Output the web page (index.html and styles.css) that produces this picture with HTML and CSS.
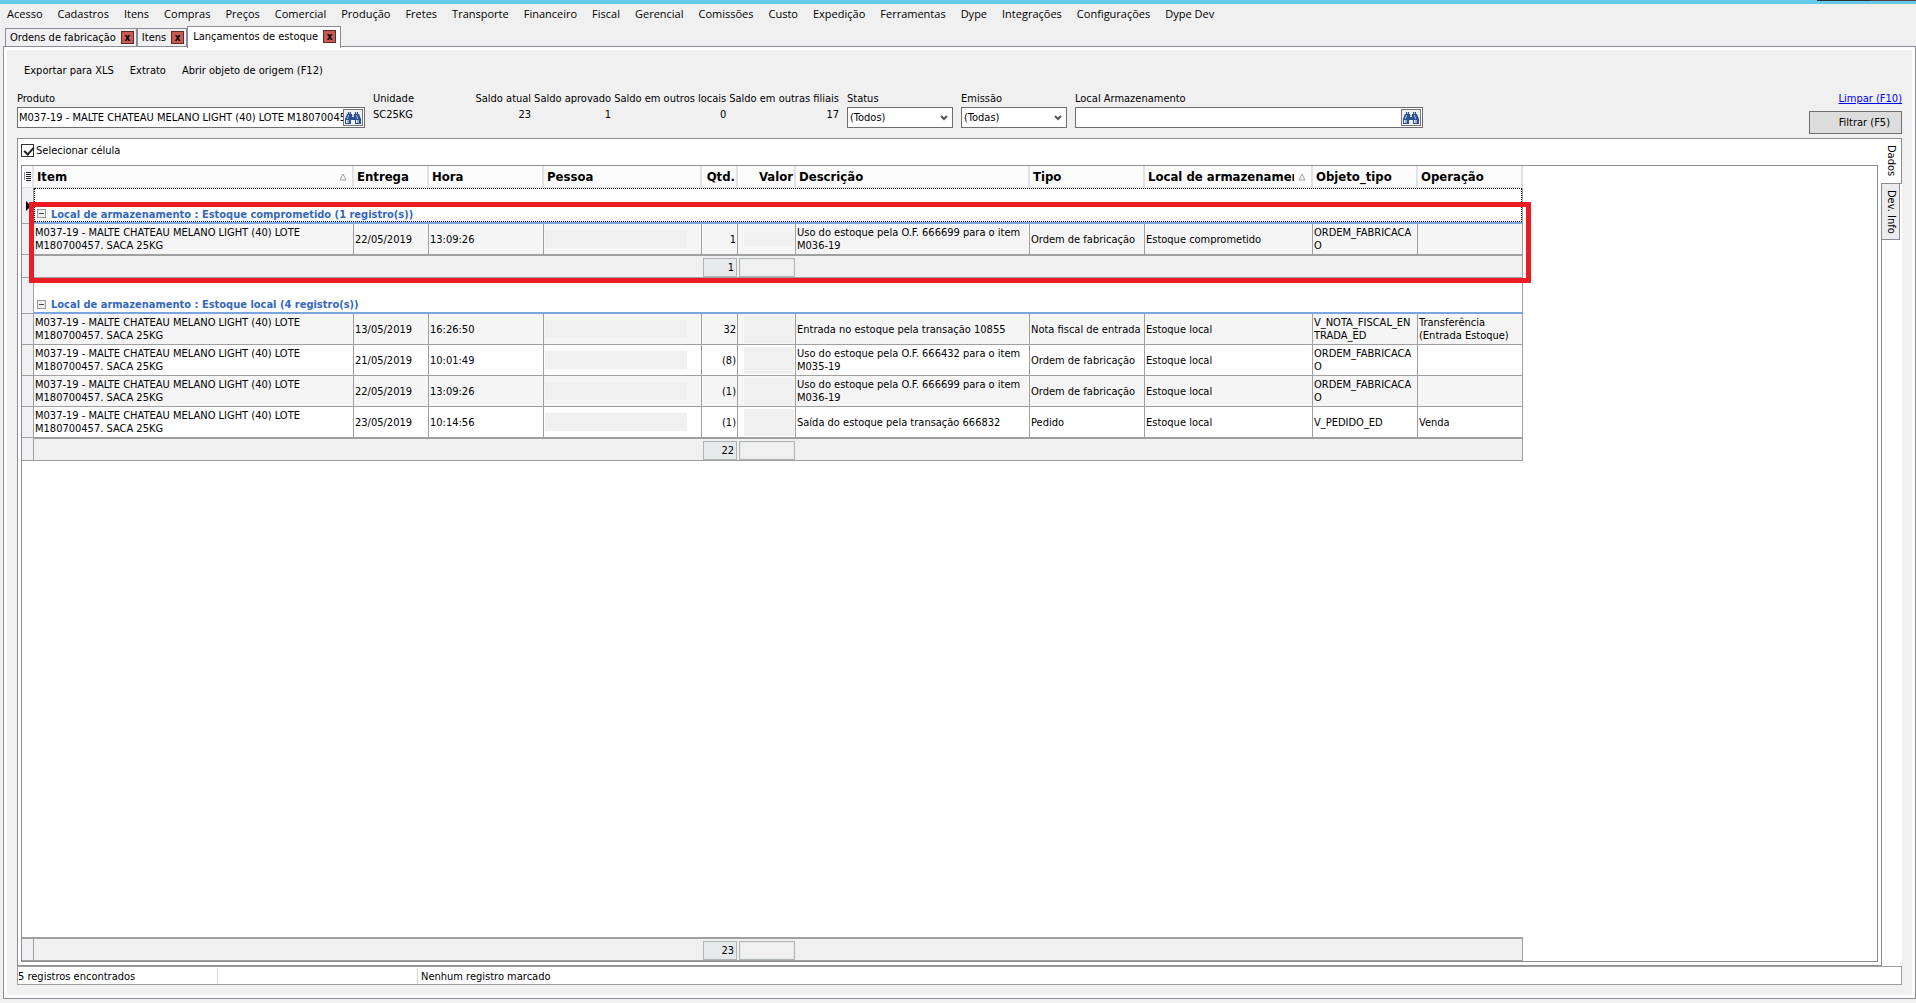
FILE: index.html
```html
<!DOCTYPE html>
<html lang="pt-BR">
<head>
    <meta charset="UTF-8">
    <meta name="viewport" content="width=device-width, initial-scale=1.0">
    <title>Lançamentos de estoque</title>
    <link rel="stylesheet" href="styles.css">
</head>
<body>

<svg class="symbols" width="0" height="0" aria-hidden="true">
    <symbol id="binoculars" viewBox="0 0 16 14">
        <path d="M3 1h3v2h1v3h2V3h1V1h3v2h1l2 5v5h-6V9H6v4H0V8l2-5h1z" fill="#2d4f8f"/>
        <path d="M4 1h1v2H4zM11 1h1v2h-1zM3 4h1l-1 4H2zM11 4h1l1 4h-1z" fill="#a9c3ea"/>
        <path d="M1 9h3v3H1zM11 9h3v3h-3z" fill="#8fb0e2"/>
        <path d="M1 9h1v3H1zM11 9h1v3h-1z" fill="#f2f7ff"/>
        <path d="M7 4h2v1H7z" fill="#8fb0e2"/>
    </symbol>
    <symbol id="chevron" viewBox="0 0 8 6">
        <path d="M1 1l3 3 3-3" fill="none" stroke="#555" stroke-width="2"/>
    </symbol>
    <symbol id="sort" viewBox="0 0 8 8">
        <path d="M4 1L7 7H1z" fill="none" stroke="#a0a0a0"/>
    </symbol>
</svg>

<div class="titlebar"><span class="caption-dark"></span><span class="caption-close"></span></div>

<nav class="menu">
    <a href="#">Acesso</a>
    <a href="#">Cadastros</a>
    <a href="#">Itens</a>
    <a href="#">Compras</a>
    <a href="#">Preços</a>
    <a href="#">Comercial</a>
    <a href="#">Produção</a>
    <a href="#">Fretes</a>
    <a href="#">Transporte</a>
    <a href="#">Financeiro</a>
    <a href="#">Fiscal</a>
    <a href="#">Gerencial</a>
    <a href="#">Comissões</a>
    <a href="#">Custo</a>
    <a href="#">Expedição</a>
    <a href="#">Ferramentas</a>
    <a href="#">Dype</a>
    <a href="#">Integrações</a>
    <a href="#">Configurações</a>
    <a href="#">Dype Dev</a>
</nav>

<div class="tabs">
    <div class="tab"><button class="tab-name">Ordens de fabricação</button><button class="tab-close">x</button></div>
    <div class="tab"><button class="tab-name">Itens</button><button class="tab-close">x</button></div>
    <div class="tab active"><button class="tab-name">Lançamentos de estoque</button><button class="tab-close">x</button></div>
</div>

<main class="page">
    <div class="toolbar">
        <button>Exportar para XLS</button>
        <button>Extrato</button>
        <button>Abrir objeto de origem (F12)</button>
    </div>

    <form class="filters">
        <div class="field lookup">
            <label for="produto">Produto</label>
            <div class="box">
                <input type="text" id="produto" value="M037-19 - MALTE CHATEAU MELANO LIGHT (40) LOTE M180700457. SACA 25KG">
                <button type="button" aria-label="Buscar produto"><svg><use href="#binoculars"/></svg></button>
            </div>
        </div>
        <dl class="balances">
            <div class="unit"><dt>Unidade</dt><dd>SC25KG</dd></div>
            <div><dt>Saldo atual</dt><dd>23</dd></div>
            <div><dt>Saldo aprovado</dt><dd>1</dd></div>
            <div><dt>Saldo em outros locais</dt><dd>0</dd></div>
            <div><dt>Saldo em outras filiais</dt><dd>17</dd></div>
        </dl>
        <div class="field choice">
            <label for="status">Status</label>
            <div class="box">
                <select id="status"><option>(Todos)</option></select>
                <svg class="arrow"><use href="#chevron"/></svg>
            </div>
        </div>
        <div class="field choice">
            <label for="emissao">Emissão</label>
            <div class="box">
                <select id="emissao"><option>(Todas)</option></select>
                <svg class="arrow"><use href="#chevron"/></svg>
            </div>
        </div>
        <div class="field lookup">
            <label for="local">Local Armazenamento</label>
            <div class="box">
                <input type="text" id="local">
                <button type="button" aria-label="Buscar local"><svg><use href="#binoculars"/></svg></button>
            </div>
        </div>
        <div class="actions">
            <a href="#">Limpar (F10)</a>
            <button type="button">Filtrar (F5)</button>
        </div>
    </form>

    <div class="views">
        <section class="panel">
            <label class="cell-select"><input type="checkbox" checked>Selecionar célula</label>

            <div class="grid">
                <div class="highlight"></div>
                <table>
                    <colgroup>
                        <col class="c-mark"><col class="c-item"><col class="c-entrega"><col class="c-hora">
                        <col class="c-pessoa"><col class="c-qtd"><col class="c-valor"><col class="c-descricao">
                        <col class="c-tipo"><col class="c-local"><col class="c-objeto"><col class="c-operacao">
                    </colgroup>
                    <thead>
                        <tr>
                            <th class="mark"><svg class="list" viewBox="0 0 7 9"><path d="M0 1h1M2 .5h5M2 2.5h5M0 3h1M2 4.5h5M0 5h1M2 6.5h5M0 7h1M2 8.5h5" stroke="#222"/></svg></th>
                            <th><div class="head"><span>Item</span><svg><use href="#sort"/></svg></div></th>
                            <th>Entrega</th>
                            <th>Hora</th>
                            <th>Pessoa</th>
                            <th class="num">Qtd.</th>
                            <th class="num">Valor</th>
                            <th>Descrição</th>
                            <th>Tipo</th>
                            <th><div class="head"><span>Local de armazenamento</span><svg><use href="#sort"/></svg></div></th>
                            <th>Objeto_tipo</th>
                            <th>Operação</th>
                        </tr>
                    </thead>
                    <tbody>
                        <tr class="group current">
                            <td class="mark"><svg class="pointer" viewBox="0 0 6 10"><path d="M0 0l5 5-5 5z"/></svg></td>
                            <td colspan="11"><div class="group-name"><button class="toggle" aria-label="Recolher"></button>Local de armazenamento : Estoque comprometido (1 registro(s))</div></td>
                        </tr>
                        <tr class="odd">
                            <td class="mark"></td>
                            <td>M037-19 - MALTE CHATEAU MELANO LIGHT (40) LOTE M180700457. SACA 25KG</td>
                            <td>22/05/2019</td>
                            <td>13:09:26</td>
                            <td class="masked"><div class="mask"></div></td>
                            <td class="num">1</td>
                            <td><div class="mask short"></div></td>
                            <td>Uso do estoque pela O.F. 666699 para o item M036-19</td>
                            <td>Ordem de fabricação</td>
                            <td>Estoque comprometido</td>
                            <td class="code">ORDEM_FABRICACAO</td>
                            <td></td>
                        </tr>
                        <tr class="total">
                            <td class="mark"></td>
                            <td colspan="4"></td>
                            <td><div class="sum">1</div></td>
                            <td><div class="sum"></div></td>
                            <td colspan="5"></td>
                        </tr>
                        <tr class="group">
                            <td class="mark"></td>
                            <td colspan="11"><div class="group-name"><button class="toggle" aria-label="Recolher"></button>Local de armazenamento : Estoque local (4 registro(s))</div></td>
                        </tr>
                        <tr class="odd">
                            <td class="mark"></td>
                            <td>M037-19 - MALTE CHATEAU MELANO LIGHT (40) LOTE M180700457. SACA 25KG</td>
                            <td>13/05/2019</td>
                            <td>16:26:50</td>
                            <td class="masked"><div class="mask"></div></td>
                            <td class="num">32</td>
                            <td><div class="mask tall"></div></td>
                            <td>Entrada no estoque pela transação 10855</td>
                            <td>Nota fiscal de entrada</td>
                            <td>Estoque local</td>
                            <td class="code">V_NOTA_FISCAL_ENTRADA_ED</td>
                            <td>Transferência (Entrada Estoque)</td>
                        </tr>
                        <tr>
                            <td class="mark"></td>
                            <td>M037-19 - MALTE CHATEAU MELANO LIGHT (40) LOTE M180700457. SACA 25KG</td>
                            <td>21/05/2019</td>
                            <td>10:01:49</td>
                            <td class="masked"><div class="mask"></div></td>
                            <td class="num">(8)</td>
                            <td><div class="mask tall"></div></td>
                            <td>Uso do estoque pela O.F. 666432 para o item M035-19</td>
                            <td>Ordem de fabricação</td>
                            <td>Estoque local</td>
                            <td class="code">ORDEM_FABRICACAO</td>
                            <td></td>
                        </tr>
                        <tr class="odd">
                            <td class="mark"></td>
                            <td>M037-19 - MALTE CHATEAU MELANO LIGHT (40) LOTE M180700457. SACA 25KG</td>
                            <td>22/05/2019</td>
                            <td>13:09:26</td>
                            <td class="masked"><div class="mask"></div></td>
                            <td class="num">(1)</td>
                            <td><div class="mask tall"></div></td>
                            <td>Uso do estoque pela O.F. 666699 para o item M036-19</td>
                            <td>Ordem de fabricação</td>
                            <td>Estoque local</td>
                            <td class="code">ORDEM_FABRICACAO</td>
                            <td></td>
                        </tr>
                        <tr>
                            <td class="mark"></td>
                            <td>M037-19 - MALTE CHATEAU MELANO LIGHT (40) LOTE M180700457. SACA 25KG</td>
                            <td>23/05/2019</td>
                            <td>10:14:56</td>
                            <td class="masked"><div class="mask"></div></td>
                            <td class="num">(1)</td>
                            <td><div class="mask tall"></div></td>
                            <td>Saída do estoque pela transação 666832</td>
                            <td>Pedido</td>
                            <td>Estoque local</td>
                            <td class="code">V_PEDIDO_ED</td>
                            <td>Venda</td>
                        </tr>
                        <tr class="total">
                            <td class="mark"></td>
                            <td colspan="4"></td>
                            <td><div class="sum">22</div></td>
                            <td><div class="sum"></div></td>
                            <td colspan="5"></td>
                        </tr>
                    </tbody>
                </table>

                <table class="grand">
                    <colgroup>
                        <col class="c-mark"><col class="c-item"><col class="c-entrega"><col class="c-hora">
                        <col class="c-pessoa"><col class="c-qtd"><col class="c-valor"><col class="c-descricao">
                        <col class="c-tipo"><col class="c-local"><col class="c-objeto"><col class="c-operacao">
                    </colgroup>
                    <tbody>
                        <tr class="total">
                            <td class="mark"></td>
                            <td colspan="4"></td>
                            <td><div class="sum">23</div></td>
                            <td><div class="sum"></div></td>
                            <td colspan="5"></td>
                        </tr>
                    </tbody>
                </table>
            </div>
        </section>
        <div class="side-tabs">
            <button class="side-tab active">Dados</button>
            <button class="side-tab">Dev. Info</button>
        </div>
    </div>

    <footer class="status">
        <span>5 registros encontrados</span>
        <span></span>
        <span>Nenhum registro marcado</span>
    </footer>
</main>

</body>
</html>
```

FILE: styles.css
```css
* {
    box-sizing: border-box;
}

body {
    display: flex;
    flex-direction: column;
    min-height: 100vh;
    margin: 0;
    padding-bottom: 4px;
    background-color: #f0f0f0;
    color: #000;
    font-family: "DejaVu Sans Condensed", Tahoma, sans-serif;
    font-size: 11px;
    line-height: 13px;
}

button,
input,
select {
    margin: 0;
    padding: 0;
    border: none;
    border-radius: 0;
    background: none;
    color: inherit;
    font: inherit;
}

.symbols {
    position: absolute;
}

/* window chrome */
.titlebar {
    display: flex;
    justify-content: flex-end;
    height: 4px;
    background-color: #66cbea;
}

.caption-dark {
    width: 54px;
    height: 1px;
    background-color: #333;
}

.caption-close {
    width: 45px;
    height: 1px;
    background-color: #5e3c3c;
}

.menu {
    display: flex;
    gap: 15px;
    height: 22px;
    padding: 0 7px;
    font-family: "Open Sans", "Segoe UI", sans-serif;
    font-size: 11px;
    line-height: 20px;
    white-space: nowrap;
}

.menu a {
    color: #000;
    text-decoration: none;
}

.tabs {
    display: flex;
    align-items: flex-end;
    height: 20px;
    padding-left: 5px;
}

.tab {
    display: flex;
    align-items: center;
    gap: 5px;
    height: 18px;
    padding: 0 2px 0 4px;
    border: 1px solid #8c8c98;
    border-bottom: none;
    white-space: nowrap;
}

.tab.active {
    z-index: 1;
    height: 22px;
    margin-bottom: -2px;
    padding: 0 4px 3px 5px;
    background-color: #fff;
}

.tab-close {
    width: 13px;
    height: 13px;
    border: 1px solid #5a2c28;
    background-color: #c75b52;
    font-weight: bold;
    font-size: 10px;
    line-height: 9px;
}

.page {
    display: flex;
    flex: 1;
    flex-direction: column;
    margin-left: 3px;
    padding: 0 13px 13px 10px;
    border: 1px solid #8c8c98;
    box-shadow: inset 0 0 0 3px #fff;
}

.toolbar {
    display: flex;
    gap: 16px;
    padding: 17px 10px 0;
}

/* filters */
.filters {
    display: flex;
    gap: 8px;
    padding: 15px 0 0 3px;
    white-space: nowrap;
}

.field label {
    display: block;
    margin-bottom: 2px;
}

.lookup {
    width: 348px;
}

.choice {
    width: 106px;
}

.box {
    display: flex;
    position: relative;
    align-items: center;
    height: 21px;
    border: 1px solid #6e6e6e;
    background-color: #fff;
}

.box input {
    flex: 1;
    min-width: 0;
    padding-left: 1px;
}

.box button {
    width: 20px;
    height: 17px;
    margin-right: 1px;
    border: 1px solid #777;
    background-color: #f0f0f0;
}

.box button svg {
    display: block;
    width: 16px;
    height: 14px;
    margin: 0 auto;
}

.box select {
    width: 100%;
    height: 100%;
    padding-left: 2px;
    appearance: none;
}

.arrow {
    position: absolute;
    right: 4px;
    width: 8px;
    height: 6px;
    pointer-events: none;
}

.balances {
    display: flex;
    gap: 3px;
    width: 466px;
    margin: 0;
    text-align: right;
}

.balances dt {
    margin-bottom: 3px;
}

.balances dd {
    margin: 0;
}

.balances div {
    flex: none;
}

.balances .unit {
    flex: 1;
    text-align: left;
}

.actions {
    display: flex;
    flex-direction: column;
    align-items: flex-end;
    gap: 6px;
    margin-left: auto;
}

.actions a {
    color: #00f;
}

.actions button {
    width: 93px;
    height: 23px;
    padding-right: 11px;
    border: 1px solid #707070;
    background-color: #ddd;
    text-align: right;
}

/* data panel */
.views {
    display: flex;
    flex: 1;
    margin: 4px 0 0 3px;
    background-color: #fff;
}

.panel {
    display: flex;
    flex: 1;
    flex-direction: column;
    padding: 5px 3px 3px;
    border: 1px solid #8c8c98;
}

.cell-select {
    display: flex;
    align-items: center;
    gap: 2px;
    align-self: flex-start;
    height: 13px;
    margin-bottom: 8px;
}

.cell-select input {
    width: 13px;
    height: 13px;
    border: 1px solid #333;
    appearance: none;
}

.cell-select input:checked::after {
    content: "";
    display: block;
    width: 4px;
    height: 8px;
    margin: 0 0 0 4px;
    border: solid #222;
    border-width: 0 2px 2px 0;
    transform: rotate(42deg);
}

.grid {
    display: flex;
    position: relative;
    flex: 1;
    flex-direction: column;
    justify-content: space-between;
    align-items: flex-start;
    border: 1px solid #8c8c98;
}

/* red frame drawn over the first group */
.highlight {
    position: absolute;
    top: 36px;
    left: 7px;
    width: 1502px;
    height: 81px;
    border: 5px solid #ed1c24;
    pointer-events: none;
}

table {
    width: 1501px;
    border-collapse: separate;
    border-spacing: 0;
    table-layout: fixed;
}

.c-mark { width: 12px; }
.c-item { width: 320px; }
.c-entrega { width: 75px; }
.c-hora { width: 115px; }
.c-pessoa { width: 158px; }
.c-qtd { width: 36px; }
.c-valor { width: 58px; }
.c-descricao { width: 234px; }
.c-tipo { width: 115px; }
.c-local { width: 168px; }
.c-objeto { width: 105px; }
.c-operacao { width: 105px; }

th {
    height: 22px;
    padding: 1px 2px 0 3px;
    border-right: 2px solid #e2e2e2;
    border-bottom: 1px solid #e2e2e2;
    background-color: #fcfcfc;
    font-size: 13px;
    line-height: 16px;
    text-align: left;
    white-space: nowrap;
}

th.num {
    padding-right: 1px;
}

th.mark {
    padding: 0 0 0 2px;
}

.list {
    display: block;
    width: 7px;
    height: 9px;
}

.head {
    display: flex;
    align-items: center;
    justify-content: space-between;
    gap: 4px;
    padding-right: 3px;
}

.head span {
    overflow: hidden;
}

.head svg {
    flex: none;
    width: 8px;
    height: 8px;
}

td {
    height: 31px;
    padding: 0 1px;
    border-right: 1px solid #a0a0a0;
    border-bottom: 1px solid #a0a0a0;
}

.odd td {
    background-color: #f5f5f5;
}

tr td.mark {
    padding: 0;
    background-color: #f0f0f0;
}

.num {
    text-align: right;
}

.code {
    word-break: break-all;
}

.mask {
    width: 142px;
    height: 18px;
    background-color: #f0f0f0;
}

.mask.short,
.mask.tall {
    width: 50px;
    height: 14px;
    margin-left: auto;
}

.mask.tall {
    height: 27px;
}

.group td {
    height: 36px;
    padding: 0;
    border-bottom: 2px solid #7ba4e0;
    vertical-align: bottom;
}

.group td.mark {
    border-bottom: 1px solid #a0a0a0;
    vertical-align: middle;
}

.pointer {
    display: block;
    width: 6px;
    height: 10px;
    margin-left: 4px;
}

.group-name {
    display: flex;
    align-items: center;
    gap: 5px;
    height: 16px;
    padding-left: 3px;
    color: #3568bd;
    font-weight: bold;
}

.current .group-name {
    align-items: flex-end;
    height: 34px;
    padding: 0 0 0 2px;
    border: 1px dotted #000;
}

.toggle {
    display: flex;
    align-items: center;
    justify-content: center;
    width: 9px;
    height: 9px;
    border: 1px solid #999;
    background-color: #eee;
}

.current .toggle {
    margin-bottom: 3px;
}

.toggle::before {
    content: "";
    width: 5px;
    height: 1px;
    background-color: #444;
}

.total td {
    height: 23px;
    padding: 1px 1px 0;
    border-top: 1px solid #a0a0a0;
    border-right: none;
    background-color: #f0f0f0;
}

.total td.mark,
.total td:last-child {
    border-right: 1px solid #a0a0a0;
}

tbody .total td.mark {
    border-top: none;
}

.sum {
    height: 19px;
    padding-right: 2px;
    border: 1px solid #b0b4b4;
    background-color: #e6eaeb;
    line-height: 18px;
    text-align: right;
}

.sum:empty {
    background-color: #f0f0f0;
    box-shadow: inset 0 0 0 1px #e6eaeb;
}

.grand .total td,
.grand .total td.mark {
    height: 24px;
    border-top: 2px solid #a0a0a0;
}

.side-tabs {
    display: flex;
    flex-direction: column;
    align-items: flex-start;
    width: 20px;
}

.side-tab {
    width: 18px;
    height: 56px;
    border: 1px solid #8c8c98;
    border-width: 0 1px 1px 0;
    background-color: #ececec;
    line-height: 16px;
    writing-mode: vertical-rl;
}

.side-tab.active {
    width: 21px;
    height: 46px;
    margin-left: -1px;
    border-width: 1px 1px 1px 0;
    background-color: #fff;
}

.status {
    display: flex;
    height: 19px;
    margin-left: 3px;
    padding-top: 1px;
    border: 1px solid #a0a0a0;
    background-color: #fff;
}

.status span {
    width: 200px;
    padding: 2px 2px 0 0;
    border-right: 1px solid #d8d8d8;
}

.status span:last-child {
    width: auto;
    padding-left: 3px;
    border-right: none;
}
```
